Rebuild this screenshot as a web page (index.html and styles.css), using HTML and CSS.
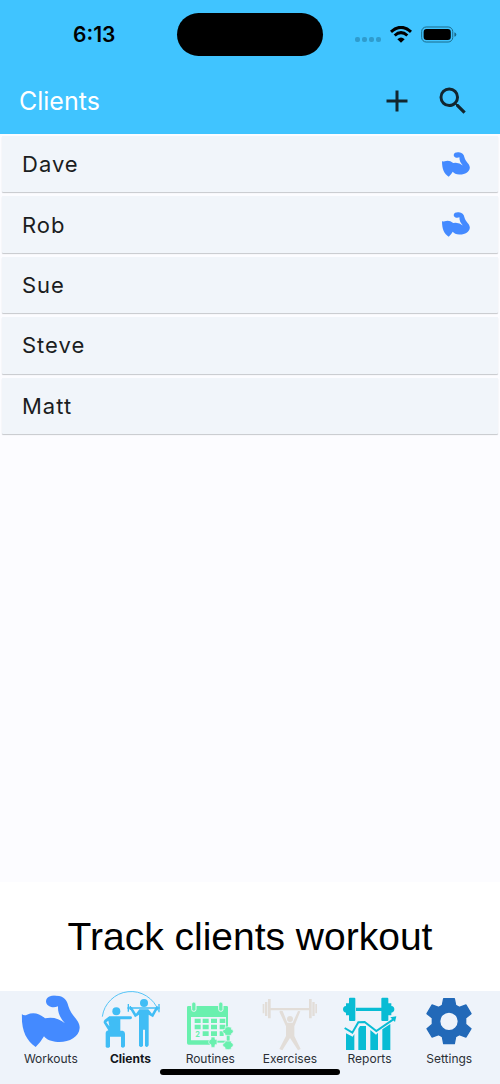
FILE: index.html
```
<!DOCTYPE html>
<html lang="en">
<head>
    <meta charset="UTF-8">
    <meta name="viewport" content="width=device-width, initial-scale=1.0">
    <title>Clients</title>
    <link rel="icon" href="data:,">
    <link rel="stylesheet" href="styles.css">
</head>
<body>
    <svg class="sprite" aria-hidden="true">
        <symbol id="arm" viewBox="0 0 175 156">
            <path d="M0 56 Q8 62 16 58 Q44 46 70 69 Q104 62 130 84 C116 68 108 54 109 33 C92 41 73 32 73 18 C74 4 90 0 103 1 C124 0 137 14 140 32 C148 62 175 74 174 98 C172 126 140 142 108 140 C88 139 75 133 67 123 Q57 141 42 155 C14 134 0 110 0 56 Z"/>
        </symbol>
    </svg>

    <header class="header">
        <div class="status-bar">
            <span class="time">6:13</span>
            <span class="island"></span>
            <div class="status-icons">
                <svg class="signal" viewBox="0 0 26 5"><rect width="5" height="5" rx="2"/><rect x="7" width="5" height="5" rx="2"/><rect x="14" width="5" height="5" rx="2"/><rect x="21" width="5" height="5" rx="2"/></svg>
                <svg class="wifi" viewBox="0 0 66 50">
                    <path d="M3 17 Q33 -10 63 17" fill="none" stroke="#000" stroke-width="9"/>
                    <path d="M14 28 Q33 11 52 28" fill="none" stroke="#000" stroke-width="9"/>
                    <path d="M22 39 Q33 29 44 39 L33 50 Z"/>
                </svg>
                <svg class="battery" viewBox="0 0 110 50">
                    <rect x="2" y="2" width="95" height="46" rx="14" fill="none" stroke="#1c6a8a" stroke-width="3"/>
                    <rect x="8" y="8" width="83" height="34" rx="9"/>
                    <path d="M102 18 Q108 20 108 25 T102 32 Z" fill="#1c6a8a"/>
                </svg>
            </div>
        </div>
        <div class="app-bar">
            <h1>Clients</h1>
            <button class="icon-button" aria-label="Add client">
                <svg viewBox="0 0 24 24"><path d="M19 13h-6v6h-2v-6H5v-2h6V5h2v6h6v2z"/></svg>
            </button>
            <button class="icon-button" aria-label="Search">
                <svg viewBox="0 0 24 24"><path d="M15.5 14h-.79l-.28-.27A6.47 6.47 0 0 0 16 9.5 6.5 6.5 0 1 0 9.5 16c1.61 0 3.09-.59 4.23-1.57l.27.28v.79l5 4.99L20.49 19l-4.99-5zm-6 0C7.01 14 5 11.99 5 9.5S7.01 5 9.5 5 14 7.01 14 9.5 11.99 14 9.5 14z"/></svg>
            </button>
        </div>
    </header>

    <main class="content">
        <ul class="client-list">
            <li class="client">Dave <svg class="arm"><use href="#arm"/></svg></li>
            <li class="client">Rob <svg class="arm"><use href="#arm"/></svg></li>
            <li class="client">Sue</li>
            <li class="client">Steve</li>
            <li class="client">Matt</li>
        </ul>
    </main>

    <p class="caption">Track clients workout</p>

    <nav class="tab-bar">
        <a class="tab" href="#workouts">
            <svg viewBox="63 33 180 180" fill="#448aff"><use href="#arm" x="65" y="46" width="175" height="156"/></svg>
            Workouts
        </a>
        <a class="tab active" href="#clients">
            <svg viewBox="31 33 180 180" fill="#40bdf5">
                <path d="M35 110 A87 87 0 0 1 203 92" fill="none" stroke="#55c4f7" stroke-width="3"/>
                <!-- trainer on the bench -->
                <circle cx="77" cy="94" r="12"/>
                <path d="M56 109 H119 Q124 109 124 113 T119 118 H89 V152 H96 Q103 153 103 161 V199 Q98 207 91 200 V170 H58 V200 Q51 207 45 200 V158 Q46 152 53 151 L39 128 Q38 123 42 119 Z"/>
                <path d="M53 122 L47 127 L56 139 Z" fill="#eef3fa"/>
                <!-- client with the bar -->
                <circle cx="160" cy="69" r="12"/>
                <path d="M110 84 H207" stroke="#40bdf5" stroke-width="4"/>
                <path d="M113 72 V95 M119 78 V90 M205 72 V97 M199 78 V91" stroke="#40bdf5" stroke-width="4"/>
                <path d="M123 80 L136 101 L146 88 H173 L184 101 L196 80 L202 85 L187 112 L174 104 V196 Q169 205 163 197 V149 H157 V197 Q151 205 145 197 V104 L133 112 L117 85 Z"/>
            </svg>
            Clients
        </a>
        <a class="tab" href="#routines">
            <svg viewBox="30 33 180 180" fill="#69f0ae">
                <path d="M55 78 H170 Q174 78 174 82 V111 H51 V82 Q51 78 55 78 Z M51 111 H63 V181 H120 V194 H56 Q51 194 51 189 Z M168 111 H174 V142 H168 Z"/>
                <rect x="65" y="66" width="13" height="28" rx="6" stroke="#eef3fa" stroke-width="3"/>
                <rect x="146" y="66" width="13" height="28" rx="6" stroke="#eef3fa" stroke-width="3"/>
                <path d="M74 116h18v13H74z M98 116h18v13H98z M123 116h18v13h-18z M149 116h17v13h-17z M74 134h18v14H74z M98 134h18v14H98z M123 134h18v14h-18z M149 134h17v14h-17z M98 154h18v14H98z M123 154h18v14h-18z M149 154h12v14h-12z"/>
                <text class="day" x="76" y="170">2</text>
                <g stroke="#eef3fa" stroke-width="2">
                    <path d="M169 160 H180 V191 H169 Z"/>
                    <path d="M138 181 H169 V189 H138 Z"/>
                    <path d="M165 142 Q174 138 184 142 V148 Q190 148 190 154 T184 161 V166 H165 V161 Q158 160 158 154 T165 148 Z M165 183 H184 V188 Q190 189 190 195 T184 202 V207 Q174 211 165 207 V202 Q158 201 158 195 T165 188 Z M123 171 H135 V178 H141 V194 H135 V201 Q129 204 123 201 V194 Q116 193 116 186 T123 178 Z"/>
                </g>
            </svg>
            Routines
        </a>
        <a class="tab" href="#exercises">
            <svg viewBox="30 33 180 180" fill="#e2ddd8">
                <path d="M60 84H180V91H60Z M54 57h8v58h-8z M45 66h7v42h-7z M38 72h5v28h-5z M177 57h8v58h-8z M187 66h7v42h-7z M196 72h5v28h-5z"/>
                <circle cx="120" cy="117" r="9"/>
                <path d="M91 92 L98 93 L112 128 H128 L144 93 L151 94 L133 139 V168 L152 207 L144 211 L120 174 L97 211 L88 207 L108 168 V139 L88 95 Z"/>
            </svg>
            Exercises
        </a>
        <a class="tab" href="#reports">
            <svg viewBox="30 33 180 180" fill="#08bcd4">
                <path d="M78 83H154V93H78Z M57 56Q57 53 60 53H73Q76 53 76 56V120Q76 123 73 123H60Q57 123 57 120V106H48V98Q39 97 39 88T48 78V70H57Z M154 56Q154 53 157 53H172Q175 53 175 56V70H184V78Q193 79 193 88T184 98V106H175V120Q175 123 172 123H157Q154 123 154 120Z"/>
                <path d="M48 160 L68 170 L73 162 V210 H48Z M85 146 L90 138 H108 V210 H85Z M121 150 L138 164 L144 158 V210 H121Z M157 148 L181 132 V210 H157Z"/>
                <path d="M44 144 L67 158 L85 127 L104 126 L139 153 L190 118" fill="none" stroke="#08bcd4" stroke-width="6"/>
                <path d="M181 112 L199 109 L195 126 Z"/>
            </svg>
            Reports
        </a>
        <a class="tab" href="#settings">
            <svg viewBox="28 33 180 180" fill="#2269b8">
                <path fill-rule="evenodd" stroke="#2269b8" stroke-width="4" stroke-linejoin="round" d="M102 56 H134 L138 76 L149 82 L169 75 L184 101 L168 114 V133 L184 146 L169 171 L149 164 L138 170 L134 191 H102 L98 170 L87 164 L67 171 L52 146 L68 133 V114 L52 101 L67 75 L87 82 L98 76 Z M118 96 A28 28 0 1 0 118 152 A28 28 0 1 0 118 96 Z"/>
            </svg>
            Settings
        </a>
        <span class="home-indicator"></span>
    </nav>
</body>
</html>
```
FILE: styles.css
```
* {
    box-sizing: border-box;
}
body {
    margin: 0;
    min-height: 100vh;
    display: flex;
    flex-direction: column;
    background-color: #fcfcff;
    color: #1b1d21;
    font-family: Inter, "Liberation Sans", sans-serif;
}
.sprite {
    position: absolute;
    width: 0;
    height: 0;
}
.header {
    background-color: #40c4ff;
}
.status-bar {
    position: relative;
    display: flex;
    align-items: center;
    justify-content: space-between;
    height: 68px;
    padding: 0 43px 0 73px;
}
.time {
    color: #000;
    font-size: 21px;
    font-weight: 600;
}
.island {
    position: absolute;
    top: 13px;
    left: 50%;
    width: 146px;
    height: 43px;
    margin-left: -73px;
    border-radius: 22px;
    background-color: #000;
}
.status-icons {
    display: flex;
    align-items: center;
    gap: 9px;
}
.signal {
    width: 26px;
    height: 5px;
    margin-top: 10px;
    fill: #2f9cce;
}
.wifi {
    width: 22px;
    height: 17px;
}
.battery {
    width: 36px;
    height: 17px;
}
.app-bar {
    display: flex;
    align-items: center;
    height: 66px;
    padding: 0 19px;
}
h1 {
    flex: 1;
    margin: 0;
    color: #fff;
    font-size: 25px;
    font-weight: 400;
}
.icon-button {
    display: flex;
    align-items: center;
    justify-content: center;
    width: 56px;
    height: 56px;
    padding: 0;
    border: none;
    background: none;
    cursor: pointer;
}
.icon-button svg {
    width: 36px;
    height: 36px;
    fill: #12262f;
}
.content {
    flex: 1;
    padding: 2px;
}
.client-list {
    display: grid;
    gap: 4px;
    min-height: 298px;
    margin: 0;
    padding: 0;
    list-style: none;
}
.client {
    display: flex;
    align-items: center;
    justify-content: space-between;
    padding: 0 28px 0 20px;
    border-radius: 1px;
    background-color: #f1f5fa;
    box-shadow: 0 1px 1px #c6c8cd;
    font-size: 22px;
    letter-spacing: 1px;
}
.arm {
    width: 28px;
    height: 25px;
    fill: #448aff;
}
.caption {
    margin: 0;
    padding: 32px 16px;
    background-color: #fff;
    color: #000;
    font-family: "Liberation Sans", Arial, sans-serif;
    font-size: 39px;
    line-height: 45px;
    text-align: center;
}
.tab-bar {
    position: relative;
    display: flex;
    height: 93px;
    padding: 0 11px;
    background-color: #eef3fa;
}
.tab {
    flex: 1;
    display: flex;
    flex-direction: column;
    align-items: center;
    color: #2b2f36;
    font-size: 12px;
    line-height: 16px;
    text-decoration: none;
}
.tab svg {
    width: 60px;
    height: 60px;
}
.tab.active {
    color: #14171c;
    font-weight: 700;
}
.day {
    font-size: 22px;
    font-weight: 700;
}
.home-indicator {
    position: absolute;
    bottom: 9px;
    left: 50%;
    width: 180px;
    height: 6px;
    margin-left: -90px;
    border-radius: 3px;
    background-color: #000;
}
```
